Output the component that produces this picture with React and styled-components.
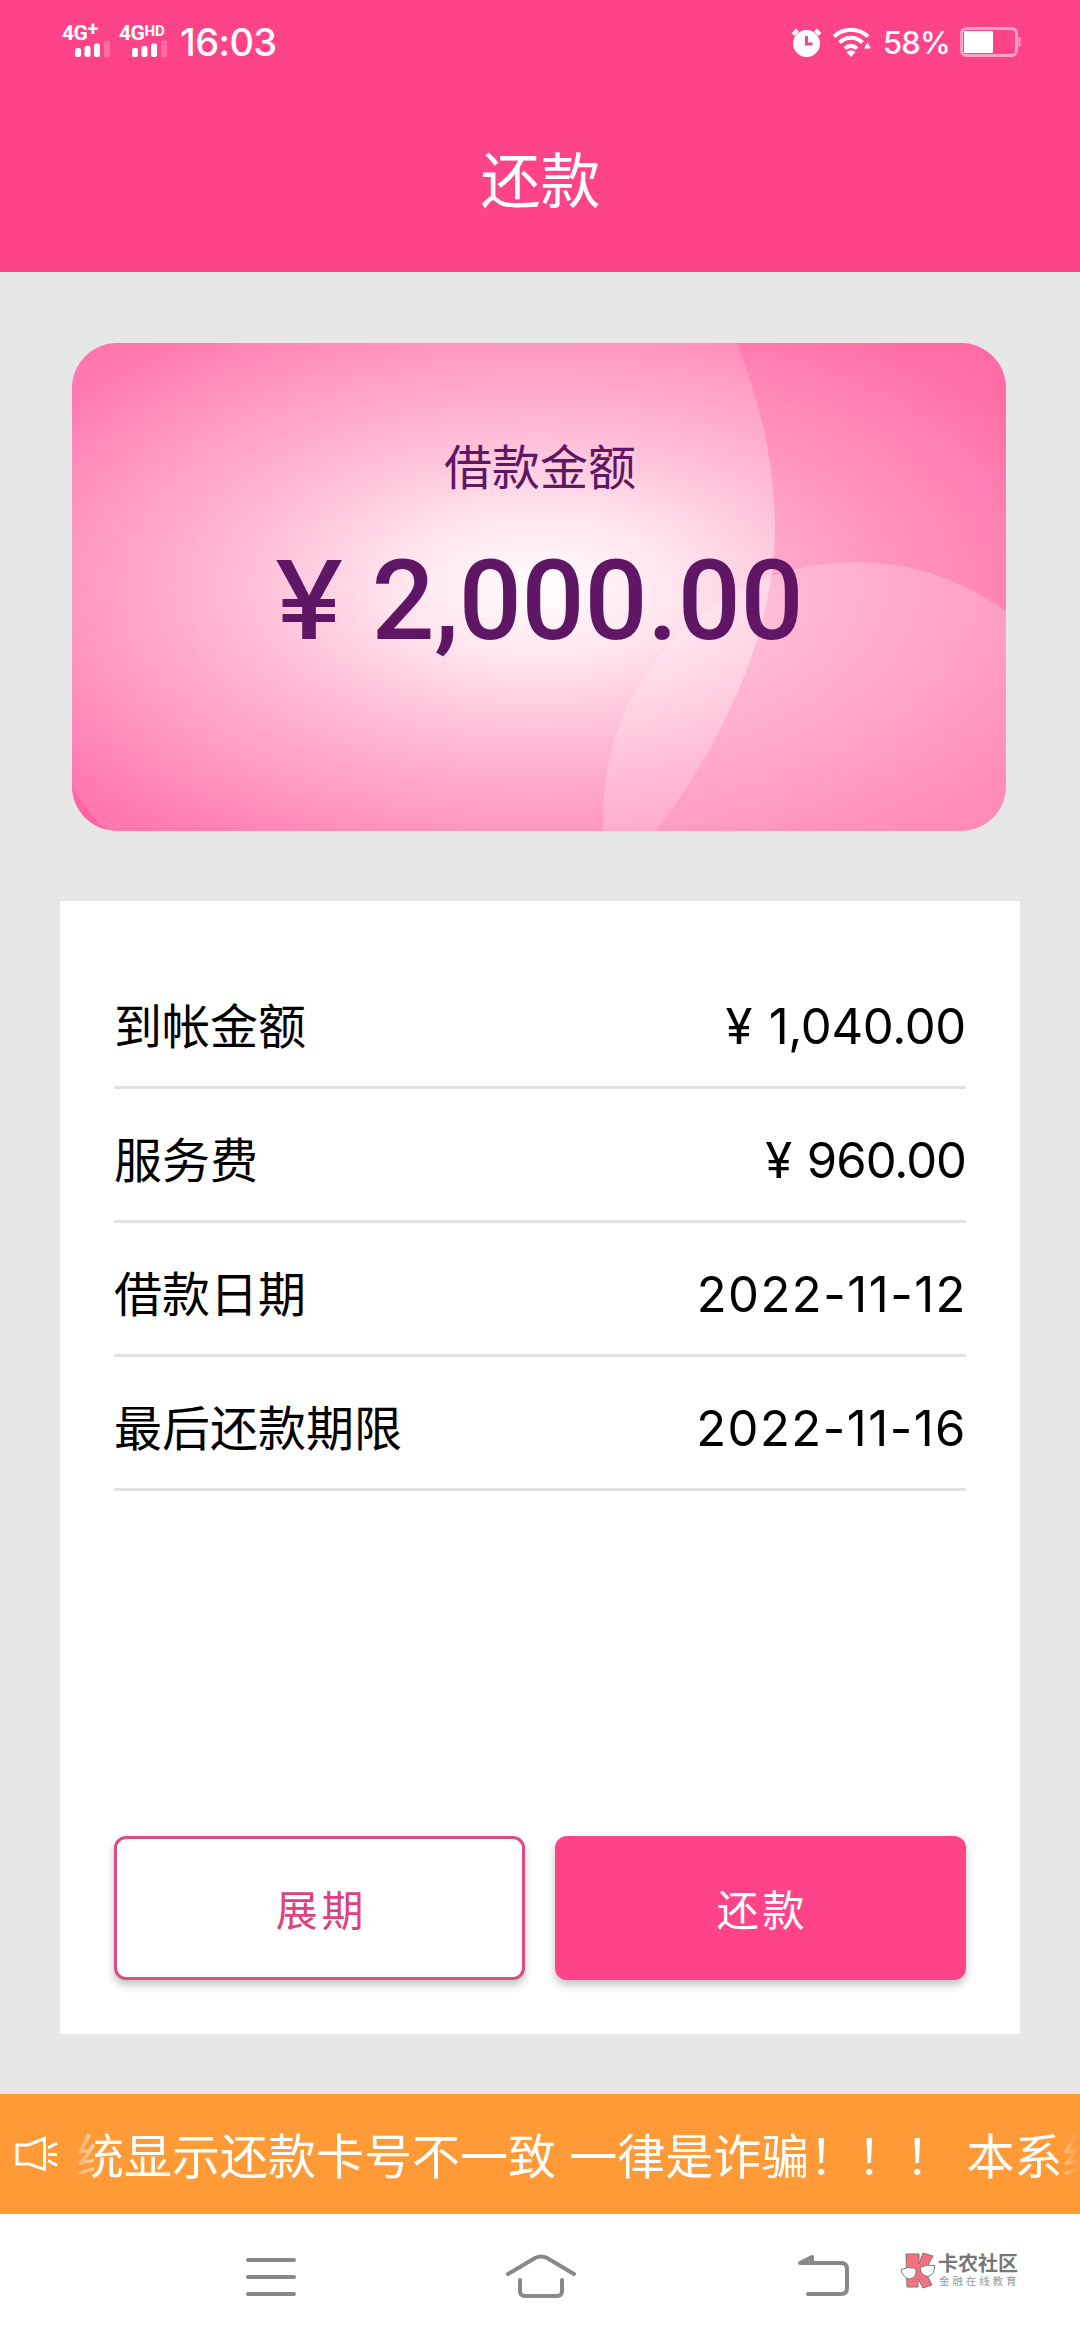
import styled, { createGlobalStyle } from 'styled-components'

const GlobalStyle = createGlobalStyle`
  * {
    box-sizing: border-box;
  }

  body {
    margin: 0;
    background: #e7e7e7;
    font-family: Inter, "Noto Sans CJK SC", sans-serif;
    color: #000;
  }
`

const Screen = styled.div`
  display: flex;
  flex-direction: column;
  height: 2340px;
  width: 1080px;
  overflow: hidden;
`

const Header = styled.header`
  height: 272px;
  background: #ff4389;
  color: #fff;
`

const StatusBar = styled.div`
  display: flex;
  justify-content: space-between;
  height: 84px;
  padding: 0 59px 0 62px;
`

const StatusGroup = styled.div`
  display: flex;
  align-items: center;
`

const Signal = styled.div`
  width: 57px;
  height: 34px;
  display: flex;
  flex-direction: column;
`

const Network = styled.div`
  display: flex;
  height: 15px;
  font: 700 21px/17px Roboto, sans-serif;
  letter-spacing: -0.5px;

  & sup {
    font-size: ${({$small}) => $small ? '15px' : '20px'};
    line-height: ${({$small}) => $small ? '12px' : '9px'};
    letter-spacing: 0;
  }
`

const Bars = styled.svg`
  width: 36px;
  height: 17px;
  margin-left: 12px;
`

const Clock = styled.span`
  font-size: 38px;
  line-height: 84px;
  font-weight: 500;
  letter-spacing: -0.6px;
  margin-left: 4px;
`

const Percent = styled.span`
  font-size: 31px;
  line-height: 87px;
  font-weight: 500;
  letter-spacing: -0.8px;
  width: 88px;
  padding-left: 11px;
`

const Title = styled.h1`
  margin: 0;
  font-size: 60px;
  font-weight: 400;
  line-height: 60px;
  padding: 67px 0 0 1px;
  text-align: center;
`

const AmountCard = styled.section`
  position: relative;
  width: 934px;
  height: 488px;
  margin: 71px 0 0 72px;
  border-radius: 45px;
  overflow: hidden;
  background: radial-gradient(ellipse farthest-corner at center, #fff 0%, #ffe3ed 22%, #ffc4db 40%, #ffaccd 55%, #ff97c0 71%, #ff7cb0 88%, #ff74ab 100%);
  color: #5f1765;
  text-align: center;
`

const CardShapes = styled.svg`
  position: absolute;
  inset: 0;
`

const CardText = styled.div`
  position: relative;
  display: flex;
  flex-direction: column;
  align-items: center;
`

const CardLabel = styled.div`
  font-size: 48px;
  line-height: 60px;
  margin: 95px 0 0 2px;
`

const CardAmount = styled.div`
  display: flex;
  align-items: baseline;
  font: 500 111px/130px Roboto, sans-serif;
  letter-spacing: -0.3px;
  margin-top: 37px;
  padding-left: 4px;
`

const Yen = styled.span`
  font-family: Inter, sans-serif;
  font-size: 108px;
  margin-right: 33px;
  transform: scaleX(1.15);
`

const Panel = styled.section`
  display: flex;
  flex-direction: column;
  width: 960px;
  height: 1133px;
  margin: 70px 60px 60px;
  padding: 54px;
  background: #fff;
`

const Row = styled.div`
  display: flex;
  justify-content: space-between;
  height: 134px;
  border-bottom: 3px solid #e0e0e0;
  font-size: 48px;
  line-height: 143px;
`

const Value = styled.span`
  font-size: 49px;
  line-height: 143px;
  letter-spacing: ${({$tracking}) => $tracking}px;
  margin-right: ${({$tracking}) => $tracking > 0 ? '-1px' : '0'};
  word-spacing: 3px;
  white-space: pre;
`

const Buttons = styled.div`
  display: grid;
  grid-template-columns: 1fr 1fr;
  gap: 30px;
  margin-top: auto;
`

const Button = styled.button`
  height: 144px;
  padding: 0 0 0 4px;
  border: 3px solid ${({$primary}) => $primary ? '#ff4389' : '#dc4c85'};
  border-radius: 12px;
  background: ${({$primary}) => $primary ? '#ff4389' : '#fff'};
  color: ${({$primary}) => $primary ? '#fff' : '#e0407f'};
  font: 400 42px/60px "Noto Sans CJK SC", sans-serif;
  letter-spacing: 3.75px;
  box-shadow: 0 5px 8px rgba(0, 0, 0, 0.24);
`

const Notice = styled.div`
  display: flex;
  align-items: center;
  height: 120px;
  background: #ff9a36;
  color: #fff;
`

const NoticeIcon = styled.svg`
  flex: none;
  width: 44px;
  height: 40px;
  margin-left: 14px;
`

const Marquee = styled.div`
  flex: 1;
  margin-left: 18px;
  overflow: hidden;
  white-space: pre;
  font: 400 48px/70px "Noto Sans CJK SC", sans-serif;
  word-spacing: 2.5px;
  padding-bottom: 2px;
  mask-image: linear-gradient(to right, rgba(0, 0, 0, 0.2) 0, rgba(0, 0, 0, 0.5) 16px, #000 19px, #000 calc(100% - 20px), rgba(0, 0, 0, 0.4) calc(100% - 17px), transparent 100%);
`

const NavBar = styled.nav`
  position: relative;
  display: grid;
  grid-template-columns: repeat(3, 270px);
  justify-content: center;
  justify-items: center;
  height: 126px;
  padding-top: 36px;
  background: #fff;
`

const NavIcon = styled.svg`
  width: 80px;
  height: 52px;
  fill: none;
  stroke: #888;
  stroke-width: 4;
  stroke-linecap: round;
  stroke-linejoin: round;
`

const Watermark = styled.div`
  position: absolute;
  left: 900px;
  top: 38px;
  display: flex;
  gap: 2px;
`

const Brand = styled.div`
  font: 700 20px/22px "Noto Sans CJK SC", sans-serif;
  color: #777;
  white-space: nowrap;

  & small {
    display: block;
    font-size: 10.5px;
    line-height: 14px;
    font-weight: 400;
    letter-spacing: 2.9px;
    padding-left: 1px;
    color: #999;
  }
`

const rows = [
  { label: '到帐金额', value: '¥ 1,040.00', tracking: -0.3 },
  { label: '服务费', value: '¥ 960.00', tracking: -1 },
  { label: '借款日期', value: '2022-11-12', tracking: 1.5 },
  { label: '最后还款期限', value: '2022-11-16', tracking: 1.5 },
]

const SignalIcon = ({tag, small}) => (
  <Signal>
    <Network $small={small}>4G<sup>{tag}</sup></Network>
    <Bars viewBox="0 0 36 17" fill="#fff">
      <rect x="1" y="8" width="6" height="9" rx="2" />
      <rect x="10.5" y="6" width="6" height="11" rx="2" />
      <rect x="20" y="3.5" width="6" height="13.5" rx="2" />
      <rect x="30" y="0.5" width="6" height="16.5" rx="1.5" opacity=".22" />
    </Bars>
  </Signal>
)

const AlarmIcon = () => (
  <svg width="32" height="32" viewBox="0 0 32 32">
    <circle cx="15.5" cy="17.5" r="13.5" fill="#fff" />
    <path d="M2 8.5 6.5 4M29 8.5 24.5 4" stroke="#fff" strokeWidth="4" />
    <path d="M15.5 10v8h6" fill="none" stroke="#ff4389" strokeWidth="3" />
  </svg>
)

const Wifi = styled.svg`
  margin-left: 9px;
`

const WifiIcon = () => (
  <Wifi width="40" height="32" viewBox="0 0 40 32" fill="none" stroke="#fff" strokeWidth="4">
    <path d="M2 10.5C12 1.500 26 1.500 36 10.5" />
    <path d="M7.5 16.500C14.5 10 23.5 10 30.5 16.5" />
    <path d="M13 22.500C17 19 21 19 25 22.5" />
    <path d="M14.500 26Q19 22.500 23.500 26L19 31Z" fill="#fff" stroke="none" />
    <path d="M32 22.500h7l-3.500-6Z" fill="#fff" stroke="none" />
  </Wifi>
)

const BatteryIcon = () => (
  <svg width="61" height="32" viewBox="0 0 61 32">
    <rect x="1.5" y="2.5" width="55" height="27" rx="5" fill="none" stroke="#ffa3c5" strokeWidth="3" />
    <rect x="4" y="5" width="29" height="22" rx="1" fill="#fff" />
    <rect x="58.5" y="11" width="2" height="10" rx="1" fill="#ffa3c5" />
  </svg>
)

export default function App () {
  return (
    <Screen>
      <GlobalStyle />
      <Header>
        <StatusBar>
          <StatusGroup>
            <SignalIcon tag="+" />
            <SignalIcon tag="HD" small />
            <Clock>16:03</Clock>
          </StatusGroup>
          <StatusGroup>
            <AlarmIcon />
            <WifiIcon />
            <Percent>58%</Percent>
            <BatteryIcon />
          </StatusGroup>
        </StatusBar>
        <Title>还款</Title>
      </Header>

      <AmountCard>
        <CardShapes width="934" height="488" viewBox="0 0 934 488">
          <path
            d="M665 0C688 60 703 120 703 185C703 290 650 400 584 488H934V0Z"
            fill="#ff4a90"
            fillOpacity=".26"
          />
          <path d="M0 443Q14 468 35 488H0Z" fill="#ff4a90" fillOpacity=".4" />
          <circle cx="784" cy="472" r="253" fill="#fff" fillOpacity=".22" />
        </CardShapes>
        <CardText>
          <CardLabel>借款金额</CardLabel>
          <CardAmount><Yen>¥</Yen>2,000.00</CardAmount>
        </CardText>
      </AmountCard>

      <Panel>
        {rows.map(item => (
          <Row key={item.label}>
            <span>{item.label}</span>
            <Value $tracking={item.tracking}>{item.value}</Value>
          </Row>
        ))}
        <Buttons>
          <Button>展期</Button>
          <Button $primary>还款</Button>
        </Buttons>
      </Panel>

      <Notice>
        <NoticeIcon viewBox="0 0 44 40" fill="none" stroke="#fff" strokeWidth="3">
          <path d="M3 11h11L30.500 4.500v31L15 30H3Z" />
          <path d="M34 14l9-5M34 20.500h9M34 26.500l9 5" />
        </NoticeIcon>
        <Marquee>统显示还款卡号不一致 一律是诈骗！！！ 本系统</Marquee>
      </Notice>

      <NavBar>
        <NavIcon viewBox="0 0 80 52">
          <path d="M18 10h46M18 27h46M18 44h46" />
        </NavIcon>
        <NavIcon viewBox="0 0 80 52">
          <path d="M8 24 35 8Q41 5 47 8L74 24" />
          <path d="M20 30v11q0 5 5 5h32q5 0 5-5V30" />
        </NavIcon>
        <NavIcon viewBox="0 0 80 52">
          <path d="M38 44h33q6 0 6-6V19q0-6-6-6H30L42 7v6" />
        </NavIcon>
        <Watermark>
          <svg width="36" height="38" viewBox="0 0 36 38" stroke="#777" strokeWidth="1">
            <path d="M6 2h13v10L23 1l10 3-8 15 7 14-9 3-5-9v8H7Z" fill="#f8707f" />
            <path d="M1 17.500Q8 14 16 16.500 17 26 9.500 27 3 26 1 17.500Z" fill="#fff" />
            <path d="M20 15.500Q27 12 34.500 13.500 35 23 28 24.500 21 24 20 15.500Z" fill="#fff" />
          </svg>
          <Brand>
            卡农社区
            <small>金融在线教育</small>
          </Brand>
        </Watermark>
      </NavBar>
    </Screen>
  )
}
